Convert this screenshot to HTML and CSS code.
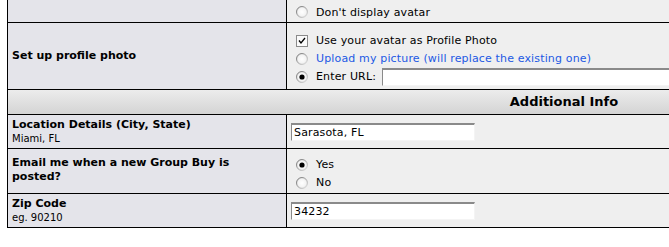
FILE: index.html
```html
<!DOCTYPE html>
<html>
<head>
<meta charset="utf-8">
<link rel="stylesheet" href="styles.css">
</head>
<body>
<div class="form">
  <div class="row row-avatar">
    <div class="label"></div>
    <div class="field">
      <div class="opt">
        <svg class="radio" width="12" height="12" viewBox="0 0 12 12"><circle cx="6" cy="6" r="5.5" fill="url(#rg)" stroke="url(#rs)"/></svg>
        <span>Don't display avatar</span>
      </div>
    </div>
  </div>
  <div class="row row-photo">
    <div class="label"><b>Set up profile photo</b></div>
    <div class="field">
      <div class="opt">
        <svg class="check" width="12" height="12" viewBox="0 0 12 12"><rect x="0.5" y="0.5" width="11" height="11" fill="#fafafa" stroke="#8a8a8a"/><path d="M3 5.5 L5 8 L9 3" fill="none" stroke="#000" stroke-width="1.3"/></svg>
        <span>Use your avatar as Profile Photo</span>
      </div>
      <div class="opt">
        <svg class="radio" width="12" height="12" viewBox="0 0 12 12"><circle cx="6" cy="6" r="5.5" fill="url(#rg)" stroke="url(#rs)"/></svg>
        <span class="link">Upload my picture (will replace the existing one)</span>
      </div>
      <div class="opt">
        <svg class="radio" width="12" height="12" viewBox="0 0 12 12"><circle cx="6" cy="6" r="5.5" fill="url(#rg)" stroke="url(#rs)"/><circle cx="6" cy="6" r="2.6" fill="#000"/></svg>
        <span>Enter URL:</span>
        <input class="text url" type="text" value="">
      </div>
    </div>
  </div>
  <div class="row header">
    <div class="head">Additional Info</div>
  </div>
  <div class="row row-loc">
    <div class="label"><b>Location Details (City, State)</b><small>Miami, FL</small></div>
    <div class="field input-field"><input class="text" type="text" value="Sarasota, FL"></div>
  </div>
  <div class="row row-email">
    <div class="label"><b>Email me when a new Group Buy is posted?</b></div>
    <div class="field">
      <div class="opt">
        <svg class="radio" width="12" height="12" viewBox="0 0 12 12"><circle cx="6" cy="6" r="5.5" fill="url(#rg)" stroke="url(#rs)"/><circle cx="6" cy="6" r="2.6" fill="#000"/></svg>
        <span>Yes</span>
      </div>
      <div class="opt">
        <svg class="radio" width="12" height="12" viewBox="0 0 12 12"><circle cx="6" cy="6" r="5.5" fill="url(#rg)" stroke="url(#rs)"/></svg>
        <span>No</span>
      </div>
    </div>
  </div>
  <div class="row row-zip">
    <div class="label"><b>Zip Code</b><small>eg. 90210</small></div>
    <div class="field input-field"><input class="text" type="text" value="34232"></div>
  </div>
</div>
<svg width="0" height="0" class="defs">
  <defs>
    <radialGradient id="rg" cx="0.5" cy="0.5" r="0.5">
      <stop offset="0" stop-color="#ffffff"/>
      <stop offset="0.7" stop-color="#f4f4f4"/>
      <stop offset="1" stop-color="#d8d8d8"/>
    </radialGradient>
    <linearGradient id="rs" x1="0" y1="0" x2="1" y2="1">
      <stop offset="0" stop-color="#6e6e6e"/>
      <stop offset="0.5" stop-color="#a8a8a8"/>
      <stop offset="1" stop-color="#e4e4e4"/>
    </linearGradient>
  </defs>
</svg>
</body>
</html>
```

FILE: styles.css
```css
html, body {
  margin: 0;
  padding: 0;
  overflow: hidden;
  background: #fff;
}
body {
  font-family: "DejaVu Sans", Verdana, sans-serif;
  font-size: 11px;
  color: #000;
}
.defs {
  position: absolute;
  width: 0;
  height: 0;
}
.form {
  margin-left: 7px;
  width: 1112px;
  border-left: 1px solid #000;
}
.row {
  display: grid;
  grid-template-columns: 279px 1fr;
  border-bottom: 1px solid #000;
}
.label {
  box-sizing: border-box;
  background: #e4e4ea;
  border-right: 1px solid #000;
  padding: 0 4px;
  display: flex;
  flex-direction: column;
  justify-content: center;
}
.label b {
  font-weight: bold;
  line-height: 14px;
}
.label small {
  font-size: 10px;
  line-height: 13px;
}
.field {
  background: #efefef;
  padding-left: 9px;
  display: flex;
  flex-direction: column;
  justify-content: center;
  letter-spacing: 0.15px;
}
.input-field {
  padding-left: 4px;
}
.opt {
  display: flex;
  align-items: center;
  height: 18px;
}
.opt svg {
  flex: none;
  margin-right: 8px;
}
.link {
  color: #2259e4;
}
.text {
  box-sizing: border-box;
  width: 184px;
  height: 18px;
  margin: 0;
  padding: 1px 2px 0;
  border: 0;
  border-top: 2px solid #8a8a8a;
  border-left: 1px solid #8a8a8a;
  border-right: 1px solid #f4f4f4;
  border-bottom: 1px solid #f4f4f4;
  background: #fff;
  font-family: "DejaVu Sans", Verdana, sans-serif;
  font-size: 11px;
  letter-spacing: 0.15px;
  color: #000;
  outline: none;
}
.url {
  width: 400px;
  margin-left: 6px;
}
.row-avatar { height: 22px; }
.row-avatar .field { padding-top: 2px; }
.row-photo { height: 66px; }
.row-photo .field { padding-top: 5px; }
.row-loc { height: 33px; }
.row-email { height: 44px; }
.row-email .field { padding-top: 5px; }
.row-email .label { padding-bottom: 2px; }
.row-zip { height: 33px; }
.header {
  height: 24px;
  display: block;
  background: linear-gradient(#ececec, #d4d4d4);
}
.head {
  text-align: center;
  font-weight: bold;
  font-size: 13px;
  line-height: 24px;
}
```
